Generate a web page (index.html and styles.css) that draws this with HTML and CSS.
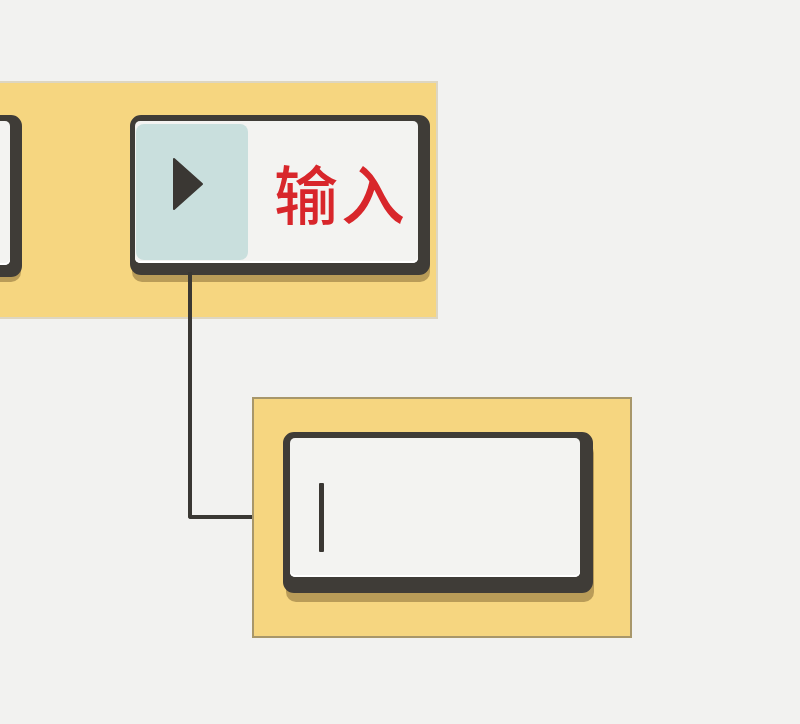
FILE: index.html
```html
<!DOCTYPE html>
<html lang="zh">
<head>
<meta charset="utf-8">
<title>输入</title>
<link rel="stylesheet" href="styles.css">
</head>
<body>
<div class="canvas">
  <div class="panel panel-top">
    <div class="card card-left"><div class="face"></div></div>
    <div class="card card-main">
      <div class="face face-main">
        <div class="play">
          <svg width="32" height="54" viewBox="0 0 32 54"><path d="M2 2 L30 27 L2 52 Z" fill="#3a3733" stroke="#3a3733" stroke-width="2" stroke-linejoin="round"/></svg>
        </div>
        <div class="label">输入</div>
      </div>
    </div>
  </div>
  <div class="connector"></div>
  <div class="panel panel-bottom">
    <div class="card card-input">
      <div class="face face-input"><span class="caret"></span></div>
    </div>
  </div>
</div>
</body>
</html>
```
FILE: styles.css
```css
html, body {
  margin: 0;
  padding: 0;
  background: #f2f2f0;
  font-family: "Noto Sans CJK SC", "Noto Sans", sans-serif;
}
.canvas {
  position: relative;
  width: 800px;
  height: 724px;
  overflow: hidden;
  background: #f2f2f0;
}
.panel {
  position: absolute;
  background: #f6d680;
  box-sizing: border-box;
}
.panel-top {
  left: -4px;
  top: 81px;
  width: 442px;
  height: 238px;
  border: 2px solid #ddd6c2;
  border-left: none;
  display: flex;
  align-items: flex-start;
  gap: 108px;
  padding-top: 32px;
}
.panel-bottom {
  left: 252px;
  top: 397px;
  width: 380px;
  height: 241px;
  border: 2px solid #a8976a;
  padding: 33px 0 0 29px;
}
.card {
  box-sizing: border-box;
  border-style: solid;
  border-color: #3f3c37;
  border-radius: 11px;
  background: #3f3c37;
  flex: none;
}
.card-left {
  width: 160px;
  height: 162px;
  margin-left: -134px;
  border-width: 6px 12px 12px 5px;
  box-shadow: 0 6px 0 -1px #b99c58;
}
.card-main {
  width: 300px;
  height: 160px;
  border-width: 6px 12px 12px 5px;
  box-shadow: 1px 8px 0 -1px #b99c58;
}
.card-input {
  width: 310px;
  height: 161px;
  border-width: 6px 13px 16px 7px;
  box-shadow: 2px 10px 0 -1px #b99c58;
}
.face {
  height: 100%;
  background: #f3f3f1;
  border-radius: 5px;
  box-sizing: border-box;
  box-shadow: inset 0 -2px 0 #ffffff;
}
.face-main {
  display: flex;
  align-items: stretch;
  padding: 3px 0 3px 1px;
}
.play {
  width: 112px;
  background: #c9dfdd;
  border-radius: 8px;
  display: flex;
  align-items: center;
  padding-left: 36px;
  padding-bottom: 16px;
  box-sizing: border-box;
}
.play svg { display: block; }
.label {
  flex: 1;
  display: flex;
  align-items: center;
  padding-left: 26px;
  padding-bottom: 2px;
  font-size: 64px;
  font-weight: 500;
  color: #d8262b;
  letter-spacing: 3px;
  line-height: 1;
}
.face-input {
  padding: 45px 0 0 29px;
}
.caret {
  display: block;
  width: 5px;
  height: 69px;
  background: #3a3733;
  border-radius: 1px;
}
.connector {
  position: absolute;
  left: 188px;
  top: 272px;
  width: 62px;
  height: 243px;
  border-left: 4px solid #3a3833;
  border-bottom: 4px solid #3a3833;
  border-bottom-left-radius: 3px;
}
```
